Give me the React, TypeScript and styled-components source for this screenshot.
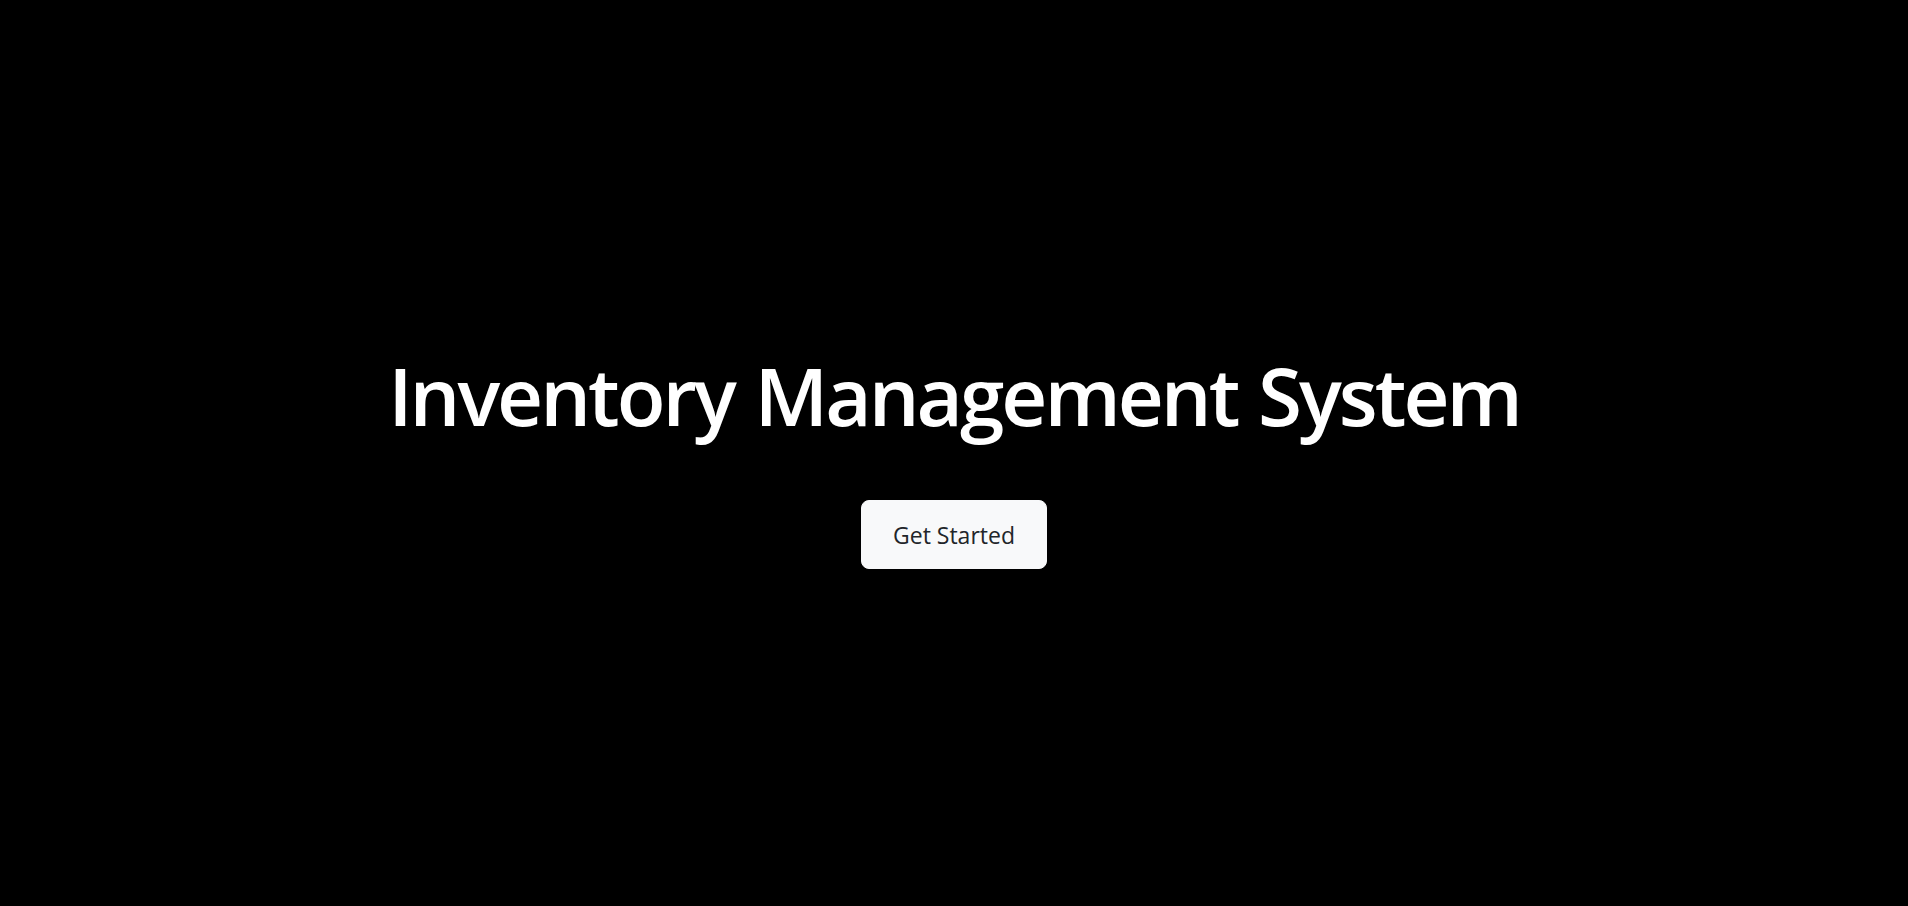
import React from "react";
import styled, { createGlobalStyle } from "styled-components";

const Global = createGlobalStyle`
  html, body { margin: 0; padding: 0; background: #000; }
  body { font-family: "Open Sans", "Noto Sans", sans-serif; }
`;

const Page = styled.main`
  min-height: 100vh;
  display: flex;
  flex-direction: column;
  align-items: center;
  justify-content: center;
  padding-top: 10px;
  background: #000;
  color: #fff;
  box-sizing: border-box;
`;

const Title = styled.h1`
  margin: 0 0 57px;
  font-size: 80px;
  line-height: 1.2;
  font-weight: 600;
  letter-spacing: -3px;
  word-spacing: 3px;
  color: #fff;
`;

const Button = styled.button`
  width: 186px;
  height: 69px;
  border: 1px solid #f8f9fa;
  border-radius: 8px;
  background: #f8f9fa;
  color: #212529;
  font-family: "Open Sans", "Noto Sans", sans-serif;
  font-size: 23px;
  font-weight: 400;
  cursor: pointer;
`;

export default function App() {
  return (
    <>
      <Global />
      <Page>
        <Title>Inventory Management System</Title>
        <Button>Get Started</Button>
      </Page>
    </>
  );
}
